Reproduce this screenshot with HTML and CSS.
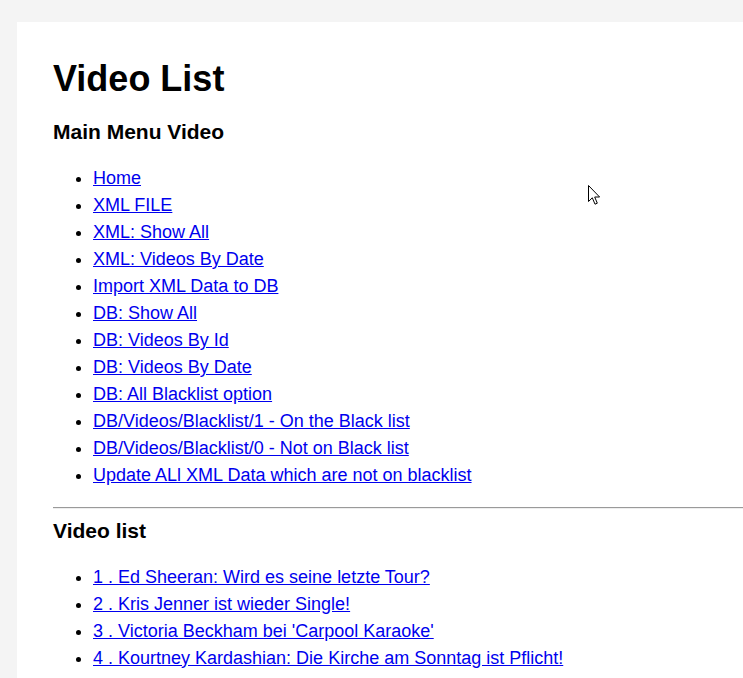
FILE: index.html
```html
<!DOCTYPE html>
<html lang="en">
<head>
<meta charset="utf-8">
<title>Video List</title>
<link rel="stylesheet" href="styles.css">
</head>
<body>
<div class="card">
  <h1 class="title">Video List</h1>
  <h3 class="section-title">Main Menu Video</h3>
  <ul class="menu">
    <li><a href="#">Home</a></li>
    <li><a href="#">XML FILE</a></li>
    <li><a href="#">XML: Show All</a></li>
    <li><a href="#">XML: Videos By Date</a></li>
    <li><a href="#">Import XML Data to DB</a></li>
    <li><a href="#">DB: Show All</a></li>
    <li><a href="#">DB: Videos By Id</a></li>
    <li><a href="#">DB: Videos By Date</a></li>
    <li><a href="#">DB: All Blacklist option</a></li>
    <li><a href="#">DB/Videos/Blacklist/1 - On the Black list</a></li>
    <li><a href="#">DB/Videos/Blacklist/0 - Not on Black list</a></li>
    <li><a href="#">Update ALl XML Data which are not on blacklist</a></li>
  </ul>
  <hr class="divider">
  <h3 class="section-title list-title">Video list</h3>
  <ul class="menu">
    <li><a href="#">1 . Ed Sheeran: Wird es seine letzte Tour?</a></li>
    <li><a href="#">2 . Kris Jenner ist wieder Single!</a></li>
    <li><a href="#">3 . Victoria Beckham bei 'Carpool Karaoke'</a></li>
    <li><a href="#">4 . Kourtney Kardashian: Die Kirche am Sonntag ist Pflicht!</a></li>
  </ul>
</div>
<svg class="cursor" width="13" height="21" viewBox="0 0 13 21" aria-hidden="true">
  <path d="M0.5 0.5 L0.5 16.5 L4.3 12.8 L7 19.2 L9.3 18.2 L6.7 12 L11.6 12 Z" fill="#fff" stroke="#000" stroke-width="1" stroke-linejoin="miter"/>
</svg>
</body>
</html>
```

FILE: styles.css
```css
html, body {
  margin: 0;
  padding: 0;
}
body {
  background: #f4f4f4;
  font-family: "Liberation Sans", Arial, sans-serif;
  color: #000;
  padding: 22px 0 0 17px;
  overflow: hidden;
  height: 678px;
  box-sizing: border-box;
  position: relative;
}
.card {
  background: #fff;
  width: 726px;
  padding: 36px 0 0 36px;
  box-sizing: border-box;
  min-height: 656px;
}
.title {
  font-size: 36px;
  font-weight: bold;
  margin: 0;
  line-height: normal;
}
.section-title {
  font-size: 21px;
  font-weight: bold;
  margin: 20px 0 21px;
  line-height: normal;
}
.list-title {
  margin-top: 9.5px;
}
.menu {
  margin: 18px 0;
  padding-left: 40px;
  font-size: 18px;
  line-height: 27px;
}
.menu a {
  color: #0000ee;
  text-decoration: underline;
}
.divider {
  margin: 0;
  border: 0;
  border-top: 1px solid #9a9a9a;
  border-bottom: 1px solid #eeeeee;
  height: 0;
}
.cursor {
  position: absolute;
  left: 588px;
  top: 185px;
}
```
